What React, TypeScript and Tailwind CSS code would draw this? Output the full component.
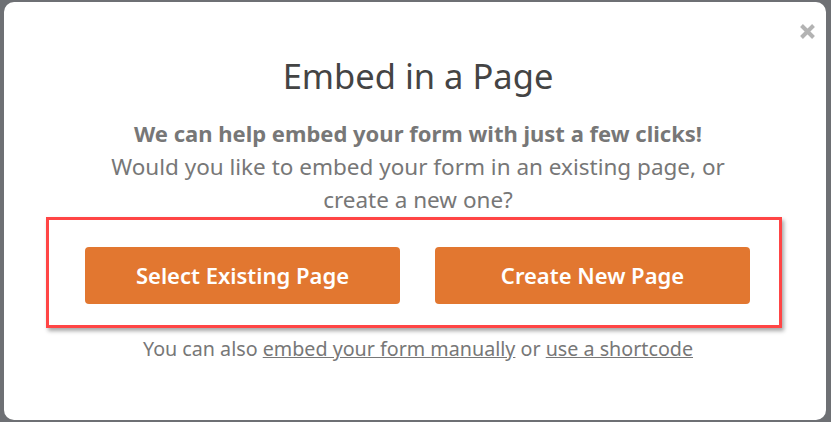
import React from "react";

export default function App() {
  return (
    <div
      className="w-[831px] h-[422px] bg-[#6e7074] pt-[2px] pl-[4px] pr-[5px] pb-[2px] overflow-hidden"
      style={{ fontFamily: '"Noto Sans", "Open Sans", sans-serif' }}
    >
      <div className="relative h-full w-full bg-white rounded-[10px] flex flex-col items-center pl-[6px]">
        <button className="absolute right-[10px] top-[21px]">
          <svg width="17" height="17" viewBox="0 0 17 17">
            <path d="M2.5 2.5 L14.5 14.5 M14.5 2.5 L2.5 14.5" stroke="#b3b3b3" strokeWidth="4" strokeLinecap="butt" />
          </svg>
        </button>
        <h1 className="mt-[52px] text-[34.5px] leading-[44px] text-[#444444] font-normal">
          Embed in a Page
        </h1>
        <div className="mt-[19px] text-center leading-[33px] text-[#777777]">
          <p className="font-bold text-[22px]">We can help embed your form with just a few clicks!</p>
          <p className="w-[660px] text-[22.5px]">
            Would you like to embed your form in an existing page, or create a new one?
          </p>
        </div>
        <div className="mt-[1px] w-[736px] h-[111px] border-[3px] border-[#ff4545] shadow-[2px_3px_4px_rgba(0,0,0,0.35)] flex items-center justify-center gap-[35px] ml-[-8px] pl-[7px]">
          <button className="w-[315px] h-[57px] rounded-[4px] bg-[#e27730] text-white text-[22px] font-semibold mt-[5px]">
            Select Existing Page
          </button>
          <button className="w-[315px] h-[57px] rounded-[4px] bg-[#e27730] text-white text-[22px] font-semibold mt-[5px]">
            Create New Page
          </button>
        </div>
        <p className="mt-[6px] text-[19.7px] leading-[30px] text-[#777777]">
          You can also <a className="underline">embed your form manually</a> or{" "}
          <a className="underline">use a shortcode</a>
        </p>
      </div>
    </div>
  );
}
